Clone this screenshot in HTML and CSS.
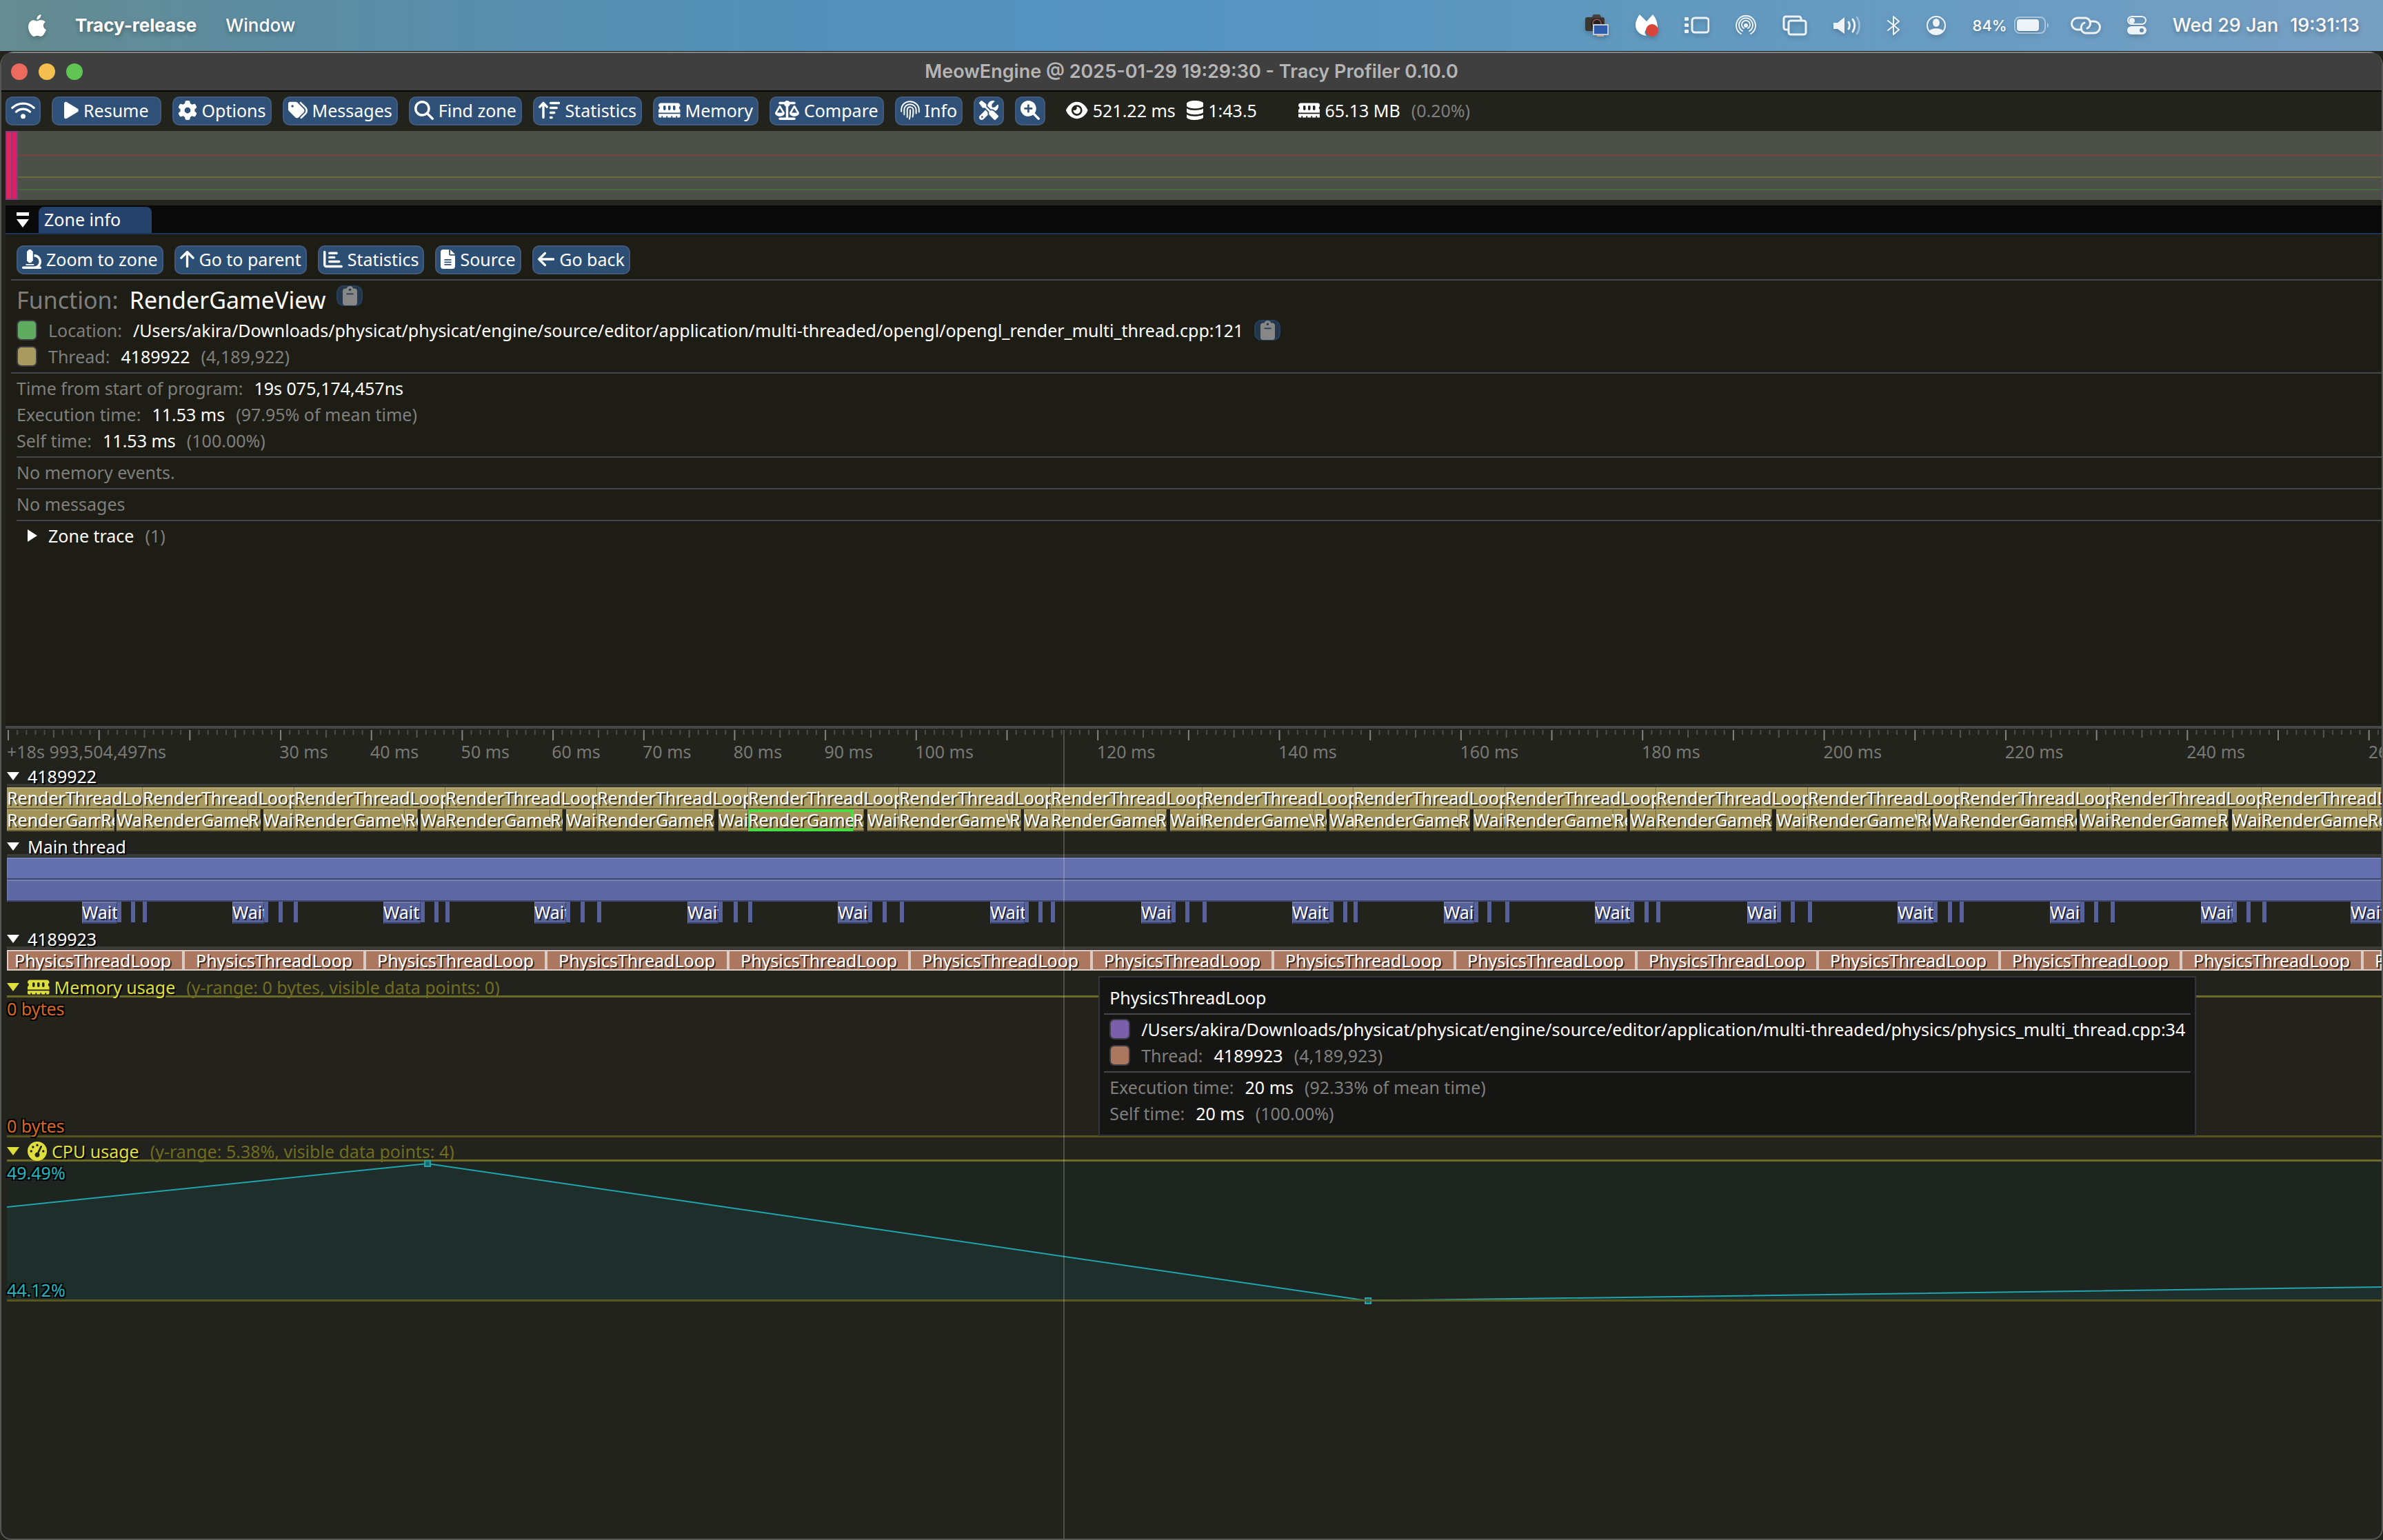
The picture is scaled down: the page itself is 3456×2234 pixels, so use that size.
FILE: index.html
```html
<!DOCTYPE html>
<html lang="en">
<head>
<meta charset="utf-8">
<title>Tracy Profiler</title>
<link rel="stylesheet" href="styles.css">
</head>
<body>
<svg class="defs" aria-hidden="true">
  <defs>
    <g id="i-wifi" fill="none" stroke="currentColor" stroke-width="60" stroke-linecap="round"><path d="M34 190A410 410 0 0 1 606 190M138 296A262 262 0 0 1 502 296"/><circle cx="320" cy="416" r="34" fill="currentColor"/></g>
    <path id="i-play" d="M73 39c-14.800-9.100-33.400-9.400-48.500-.900S0 62.600 0 80V432c0 17.400 9.400 33.400 24.500 41.900s33.700 8.100 48.500-.900L361 297c14.300-8.700 23-24.200 23-41s-8.700-32.200-23-41L73 39z"/>
    <path id="i-gear" d="M495.9 166.6c3.2 8.7 .5 18.400-6.400 24.600l-43.300 39.400c1.100 8.300 1.700 16.800 1.700 25.400s-.6 17.100-1.700 25.400l43.300 39.400c6.900 6.200 9.600 15.900 6.400 24.600c-4.400 11.900-9.700 23.300-15.800 34.300l-4.700 8.100c-6.600 11-14 21.400-22.100 31.200c-5.900 7.200-15.700 9.600-24.500 6.800l-55.700-17.700c-13.400 10.300-28.200 18.900-44 25.400l-12.500 57.100c-2 9.100-9 16.300-18.200 17.800c-13.800 2.300-28 3.500-42.500 3.500s-28.700-1.200-42.500-3.500c-9.200-1.500-16.200-8.700-18.200-17.800l-12.500-57.100c-15.800-6.500-30.600-15.100-44-25.400L83.1 425.900c-8.800 2.800-18.600 .3-24.500-6.800c-8.100-9.800-15.500-20.200-22.100-31.200l-4.700-8.100c-6.100-11-11.400-22.400-15.800-34.300c-3.200-8.700-.5-18.400 6.400-24.600l43.300-39.400C64.600 273.100 64 264.600 64 256s.6-17.100 1.700-25.400L22.400 191.200c-6.900-6.200-9.600-15.900-6.400-24.600c4.400-11.900 9.700-23.300 15.800-34.300l4.700-8.100c6.600-11 14-21.400 22.100-31.200c5.900-7.200 15.700-9.600 24.500-6.800l55.700 17.700c13.400-10.300 28.200-18.900 44-25.400l12.500-57.100c2-9.100 9-16.300 18.200-17.800C227.300 1.200 241.500 0 256 0s28.700 1.200 42.500 3.500c9.200 1.500 16.200 8.700 18.200 17.800l12.500 57.100c15.800 6.500 30.600 15.100 44 25.400l55.700-17.700c8.800-2.800 18.600-.3 24.500 6.800c8.100 9.800 15.500 20.200 22.100 31.200l4.700 8.100c6.100 11 11.400 22.400 15.800 34.300zM256 336a80 80 0 1 0 0-160 80 80 0 1 0 0 160z"/>
    <path id="i-tags" d="M345 39.100L472.800 168.400c52.400 53 52.400 138.200 0 191.200L360.800 472.900c-9.300 9.400-24.500 9.500-33.900 .2s-9.500-24.500-.2-33.900L438.600 325.900c33.900-34.300 33.900-89.400 0-123.700L310.900 72.900c-9.300-9.400-9.200-24.600 .2-33.900s24.600-9.200 33.900 .2zM0 229.500V80C0 53.500 21.500 32 48 32H197.500c17 0 33.300 6.700 45.300 18.700l168 168c25 25 25 65.500 0 90.500L277.300 442.700c-25 25-65.500 25-90.500 0l-168-168C6.700 262.700 0 246.500 0 229.500zM144 144a32 32 0 1 0 -64 0 32 32 0 1 0 64 0z"/>
    <path id="i-search" d="M416 208c0 45.900-14.900 88.300-40 122.700L502.600 457.400c12.500 12.500 12.500 32.800 0 45.300s-32.800 12.500-45.300 0L330.700 376c-34.400 25.200-76.800 40-122.700 40C93.100 416 0 322.900 0 208S93.100 0 208 0S416 93.100 416 208zM208 352a144 144 0 1 0 0-288 144 144 0 1 0 0 288z"/>
    <path id="i-zoomin" fill-rule="evenodd" d="M416 208c0 45.900-14.900 88.300-40 122.700L502.600 457.400c12.500 12.500 12.500 32.800 0 45.300s-32.800 12.500-45.300 0L330.700 376c-34.400 25.200-76.800 40-122.700 40C93.100 416 0 322.900 0 208S93.100 0 208 0S416 93.100 416 208zM184 296c0 13.300 10.700 24 24 24s24-10.700 24-24V232h64c13.300 0 24-10.700 24-24s-10.700-24-24-24H232V120c0-13.300-10.700-24-24-24s-24 10.700-24 24v64H120c-13.300 0-24 10.700-24 24s10.700 24 24 24h64v64z"/>
    <g id="i-sort" fill="none" stroke="currentColor" stroke-width="62" stroke-linecap="round" stroke-linejoin="round"><path d="M128 450V66M32 166l96-104 96 104M320 64h224M320 192h160M320 320h96M320 448h32"/></g>
    <path id="i-memory" d="M64 64C28.700 64 0 92.700 0 128v7.400c0 6.800 4.400 12.600 10.100 16.300C23.300 160.300 32 175.100 32 192s-8.700 31.700-21.900 40.300C4.400 236 0 241.800 0 248.600V320H576V248.600c0-6.800-4.400-12.600-10.100-16.300C552.700 223.700 544 208.900 544 192s8.700-31.700 21.900-40.300c5.700-3.700 10.100-9.500 10.100-16.300V128c0-35.300-28.700-64-64-64H64zM576 352H0v64c0 17.700 14.300 32 32 32H80V416c0-8.800 7.200-16 16-16s16 7.200 16 16v32h96V416c0-8.800 7.200-16 16-16s16 7.200 16 16v32h96V416c0-8.800 7.200-16 16-16s16 7.200 16 16v32h96V416c0-8.800 7.200-16 16-16s16 7.200 16 16v32h48c17.700 0 32-14.300 32-32V352zM192 160v64c0 17.700-14.300 32-32 32s-32-14.300-32-32V160c0-17.700 14.300-32 32-32s32 14.300 32 32zm128 0v64c0 17.700-14.300 32-32 32s-32-14.300-32-32V160c0-17.700 14.300-32 32-32s32 14.300 32 32zm128 0v64c0 17.700-14.300 32-32 32s-32-14.300-32-32V160c0-17.700 14.300-32 32-32s32 14.300 32 32z"/>
    <path id="i-scale" d="M384 32H512c17.700 0 32 14.300 32 32s-14.300 32-32 32H398.400c-5.200 25.800-22.900 47.100-46.400 57.300V448H512c17.700 0 32 14.300 32 32s-14.300 32-32 32H320 128c-17.700 0-32-14.300-32-32s14.300-32 32-32H288V153.300c-23.500-10.300-41.200-31.600-46.400-57.300H128c-17.700 0-32-14.300-32-32s14.300-32 32-32H256c14.600-19.400 37.800-32 64-32s49.400 12.600 64 32zm55.600 288H584.400L512 195.800 439.600 320zM512 416c-62.900 0-115.200-34-126-78.900c-2.600-11 1-22.300 6.700-32.100l95.200-163.200c5-8.600 14.200-13.800 24.100-13.800s19.100 5.300 24.100 13.800l95.200 163.200c5.700 9.800 9.300 21.100 6.700 32.100C627.200 382 574.900 416 512 416zM126.800 195.800L54.400 320H199.300L126.800 195.800zM.9 337.100c-2.600-11 1-22.300 6.700-32.100l95.200-163.200c5-8.600 14.200-13.800 24.100-13.800s19.100 5.300 24.100 13.800l95.200 163.200c5.700 9.800 9.300 21.100 6.700 32.100C242 382 189.700 416 126.800 416S11.700 382 .9 337.100z"/>
    <g id="i-finger" fill="none" stroke="currentColor" stroke-width="36" stroke-linecap="round"><path d="M22 290V240C24 110 125 22 250 22S486 112 490 236V300M98 370V245C98 160 165 96 254 96S414 160 414 250V340M176 440C182 380 176 310 178 245C180 200 214 170 256 170S336 204 338 250C340 310 336 370 322 430M256 246C258 330 258 410 236 486"/></g>
    <path id="i-tools" d="M78.600 5C69.100-2.400 55.600-1.500 47 7L7 47c-8.500 8.500-9.400 22-2.100 31.600l80 104c4.500 5.900 11.600 9.400 19 9.400h54.100l109 109c-14.700 29-10 65.400 14.300 89.600l112 112c12.500 12.500 32.800 12.500 45.300 0l64-64c12.500-12.500 12.500-32.800 0-45.300l-112-112c-24.200-24.200-60.600-29-89.600-14.300l-109-109V104c0-7.500-3.500-14.500-9.400-19L78.600 5zM19.900 396.100C7.200 408.800 0 426.100 0 444.100C0 481.600 30.400 512 67.900 512c18 0 35.300-7.200 48-19.900L233.700 374.300c-7.800-20.900-9-43.600-3.600-65.100l-61.700-61.700L19.900 396.100zM512 144c0-10.500-1.100-20.700-3.200-30.500c-2.400-11.200-16.100-14.100-24.200-6l-63.900 63.900c-3 3-7.100 4.700-11.300 4.700H352c-8.800 0-16-7.200-16-16V102.600c0-4.200 1.700-8.300 4.700-11.300l63.900-63.900c8.100-8.100 5.200-21.800-6-24.200C388.700 1.100 378.500 0 368 0C288.500 0 224 64.500 224 144l0 .8 85.300 85.300c36-9.100 75.800 .5 104 28.700L429 274.500c49-23 83-72.800 83-130.500zM56 432a24 24 0 1 1 48 0 24 24 0 1 1 -48 0z"/>
    <path id="i-eye" d="M288 32c-80.800 0-145.500 36.800-192.600 80.600C48.600 156 17.300 208 2.500 243.700c-3.300 7.900-3.300 16.700 0 24.600C17.300 304 48.600 356 95.400 399.400C142.500 443.200 207.200 480 288 480s145.500-36.800 192.600-80.600c46.800-43.500 78.100-95.400 93-131.100c3.300-7.900 3.300-16.700 0-24.600c-14.900-35.700-46.200-87.700-93-131.100C433.500 68.800 368.800 32 288 32zM144 256a144 144 0 1 1 288 0 144 144 0 1 1 -288 0zm144-64c0 35.300-28.700 64-64 64c-7.100 0-13.900-1.200-20.300-3.300c-5.500-1.800-11.900 1.600-11.700 7.400c.3 6.900 1.300 13.800 3.200 20.700c13.700 51.200 66.400 81.600 117.600 67.900s81.600-66.400 67.900-117.600c-11.100-41.500-47.800-69.400-88.600-71.100c-5.800-.2-9.200 6.100-7.400 11.700c2.100 6.400 3.300 13.200 3.300 20.300z"/>
    <path id="i-db" d="M448 80v48c0 44-100 80-224 80S0 172 0 128V80C0 36 100 0 224 0s224 36 224 80zM0 206c50 38 135 50 224 50s174-12 224-50v82c0 44-100 80-224 80S0 332 0 288zM0 366c50 38 135 50 224 50s174-12 224-50v66c0 44-100 80-224 80S0 476 0 432z"/>
    <path id="i-scope" d="M160 32c0-17.700 14.300-32 32-32h32c17.700 0 32 14.300 32 32c17.700 0 32 14.300 32 32V288c0 17.700-14.300 32-32 32c0 17.700-14.300 32-32 32H192c-17.700 0-32-14.300-32-32c-17.700 0-32-14.300-32-32V64c0-17.700 14.300-32 32-32zM32 448H320c70.700 0 128-57.300 128-128s-57.300-128-128-128V128c106 0 192 86 192 192c0 49.200-18.500 94-48.900 128H480c17.700 0 32 14.300 32 32s-14.300 32-32 32H320 32c-17.700 0-32-14.300-32-32s14.300-32 32-32zm80-64H304c8.800 0 16 7.200 16 16s-7.200 16-16 16H112c-8.800 0-16-7.200-16-16s7.200-16 16-16z"/>
    <g id="i-up" fill="none" stroke="currentColor" stroke-width="62" stroke-linecap="round" stroke-linejoin="round"><path d="M192 450V66M34 222L192 64l158 158"/></g>
    <g id="i-left" fill="none" stroke="currentColor" stroke-width="62" stroke-linecap="round" stroke-linejoin="round"><path d="M416 256H34M190 98L32 256l158 158"/></g>
    <g id="i-bars" fill="none" stroke="currentColor" stroke-width="62" stroke-linecap="round" stroke-linejoin="round"><path d="M32 62V400c0 26 22 48 48 48H480M160 96H352M160 208H288M160 320H416"/></g>
    <path id="i-file" d="M64 0C28.700 0 0 28.700 0 64V448c0 35.300 28.700 64 64 64H320c35.300 0 64-28.700 64-64V160H256c-17.700 0-32-14.300-32-32V0H64zM256 0V128H384L256 0zM112 256H272c8.800 0 16 7.200 16 16s-7.200 16-16 16H112c-8.800 0-16-7.200-16-16s7.200-16 16-16zm0 64H272c8.800 0 16 7.200 16 16s-7.200 16-16 16H112c-8.800 0-16-7.200-16-16s7.200-16 16-16zm0 64H272c8.800 0 16 7.200 16 16s-7.200 16-16 16H112c-8.800 0-16-7.200-16-16s7.200-16 16-16z"/>
    <path id="i-clip" fill-rule="evenodd" d="M192 0c-42 0-77 27-90 64H64C29 64 0 93 0 128V448c0 35 29 64 64 64H320c35 0 64-29 64-64V128c0-35-29-64-64-64H282C269 27 234 0 192 0zM192 64a32 32 0 1 1 0 64 32 32 0 1 1 0-64zM112 192H272a16 16 0 0 1 0 32H112a16 16 0 0 1 0-32z"/>
    <path id="i-gauge" fill-rule="evenodd" d="M0 256a256 256 0 1 1 512 0A256 256 0 1 1 0 256zM288 96a32 32 0 1 0-64 0 32 32 0 1 0 64 0zM256 416c35 0 64-29 64-64 0-17-7-33-18-44L382 142c6-12 1-26-11-32s-26-1-32 11L259 288c-36-2-67 28-67 64 0 35 29 64 64 64zM176 144a32 32 0 1 0-64 0 32 32 0 1 0 64 0zM96 288a32 32 0 1 0 0-64 32 32 0 1 0 0 64zM448 256a32 32 0 1 0-64 0 32 32 0 1 0 64 0z"/>
    <path id="i-right" d="M0 0L14 9L0 18z"/>
    <path id="i-down" d="M0 0H18L9 12z"/>
  </defs>
</svg>

<header class="menubar">
  <nav class="menubar-left">
    <svg class="apple" viewBox="0 0 26 32"><path d="M18.500 0C18.700 2 17.900 3.900 16.800 5.200 15.700 6.500 14 7.500 12.300 7.400 12.100 5.500 13 3.600 14 2.400 15.200 1.100 17 .1 18.500 0zM24.800 11C23 12.200 21.900 13.900 21.900 16.200c0 2.800 1.700 4.900 4.100 5.800-.7 2.200-1.800 4.400-3.300 6.500-1.300 1.900-2.600 3.300-4.600 3.300-1.900 0-2.600-1.100-4.900-1.100-2.300 0-3.100 1.100-4.900 1.200-1.900 0-3.300-1.600-4.700-3.600C-.2 23.400-.9 16.500 1.400 12.300 2.700 9.800 5.100 8.300 7.500 8.200c2.100 0 3.800 1.300 5.100 1.300 1.200 0 3.300-1.500 5.900-1.400 2.500.1 4.800 1 6.300 2.900z" fill="#fff"/></svg>
    <b>Tracy-release</b>
    <span>Window</span>
  </nav>
  <div class="menubar-right">
    <svg class="m-cam" viewBox="0 0 34 34"><rect x="0" y="5" width="28" height="20" rx="3" fill="#3a3733"/><path d="M9 6l3-5h9l3 5z" fill="#46423e"/><circle cx="17" cy="15" r="9" fill="#221f1e"/><circle cx="17" cy="14" r="6" fill="none" stroke="#84514b" stroke-width="2"/><rect x="12" y="16" width="21" height="14" fill="#2f5dad" stroke="#c3cbd4" stroke-width="2"/><path d="M17 32h10" stroke="#c3a58b" stroke-width="2"/></svg>
    <svg class="m-mb" viewBox="0 0 34 32"><path d="M7 0L17 10 26 0C31 6 33 12 33 20L20 20C14 22 13 27 17 31 6 30 0 22 1 13 2 8 4 4 7 0z" fill="#fff"/><circle cx="25" cy="23" r="9" fill="#d9453b"/></svg>
    <svg class="m-stage" viewBox="0 0 36 26"><g fill="#eef3f8"><rect y="1" width="6" height="5" rx="1"/><rect y="10" width="6" height="5" rx="1"/><rect y="19" width="6" height="5" rx="1"/></g><rect x="11" y="2" width="24" height="21" rx="4" fill="none" stroke="#eef3f8" stroke-width="3"/></svg>
    <svg class="m-drop" viewBox="0 0 30 30" fill="none" stroke="#eef3f8" stroke-width="2" stroke-linecap="round"><path d="M8 27A14 14 0 1 1 22 27M10 23A10 10 0 1 1 20 23M12 19A6 6 0 1 1 18 19"/><circle cx="15" cy="15" r="2" fill="#eef3f8"/></svg>
    <svg class="m-win" viewBox="0 0 36 30" fill="none" stroke="#eef3f8" stroke-width="3"><path d="M8 21H5a3 3 0 0 1-3-3V5a3 3 0 0 1 3-3H24a3 3 0 0 1 3 3V7"/><rect x="9" y="8" width="25" height="20" rx="3"/></svg>
    <svg class="m-vol" viewBox="0 0 40 28" fill="none" stroke="#eef3f8" stroke-width="3" stroke-linecap="round"><path d="M0 10H6L16 2V26L6 19H0z" fill="#eef3f8" stroke="none"/><path d="M22 9A10 10 0 0 1 22 19M28 5A16 16 0 0 1 28 23"/><path d="M34 2A22 22 0 0 1 34 26" opacity=".4"/></svg>
    <svg class="m-bt" viewBox="0 0 18 30" fill="none" stroke="#eef3f8" stroke-width="2" stroke-linejoin="round" stroke-linecap="round"><path d="M1 8L17 21 9 28V2L17 9 1 22"/></svg>
    <svg class="m-user" viewBox="0 0 30 30"><circle cx="15" cy="15" r="13" fill="none" stroke="#eef3f8" stroke-width="2"/><ellipse cx="15" cy="11" rx="5" ry="6" fill="#eef3f8"/><path d="M5 23C8 18 22 18 25 23 20 30 10 30 5 23z" fill="#eef3f8"/></svg>
    <span class="battery"><small>84%</small><svg class="m-bat" viewBox="0 0 52 26"><rect x="1" y="1" width="44" height="23" rx="7" fill="none" stroke="#eef3f8" stroke-width="2" opacity=".5"/><rect x="4" y="4" width="32" height="17" rx="4" fill="#eef3f8"/><path d="M48 9q4 3 0 8z" fill="#eef3f8" opacity=".6"/></svg></span>
    <svg class="m-link" viewBox="0 0 44 28" fill="none" stroke="#eef3f8" stroke-width="3" stroke-linecap="round"><path d="M15 20H10A8 8 0 0 1 10 3H22A8 8 0 0 1 24 18M29 8H34A8 8 0 0 1 34 25H21A8 8 0 0 1 20 10"/></svg>
    <svg class="m-cc" viewBox="0 0 28 28"><rect x="1" y="1" width="26" height="11" rx="6" fill="none" stroke="#eef3f8" stroke-width="2"/><circle cx="7" cy="7" r="4" fill="#eef3f8"/><path fill-rule="evenodd" fill="#eef3f8" d="M6 15H22a6 6 0 0 1 0 12H6a6 6 0 0 1 0-12zM21 18a3 3 0 1 0 0 6 3 3 0 1 0 0-6z"/></svg>
    <time><span>Wed 29 Jan</span><span>19:31:13</span></time>
  </div>
</header>

<main class="window">
  <div class="titlebar">
    <div class="lights"><i class="red"></i><i class="yellow"></i><i class="green"></i></div>
    <h1>MeowEngine @ 2025-01-29 19:29:30 - Tracy Profiler 0.10.0</h1>
  </div>

  <div class="toolbar">
    <button aria-label="Connection"><svg class="icon" viewBox="0 0 640 512"><use href="#i-wifi"/></svg></button>
    <button class="wide"><svg class="icon" viewBox="0 0 384 512"><use href="#i-play"/></svg>Resume</button>
    <button><svg class="icon" viewBox="0 0 512 512"><use href="#i-gear"/></svg>Options</button>
    <button><svg class="icon" viewBox="0 0 512 512"><use href="#i-tags"/></svg>Messages</button>
    <button><svg class="icon" viewBox="0 0 512 512"><use href="#i-search"/></svg>Find zone</button>
    <button><svg class="icon" viewBox="0 0 576 512"><use href="#i-sort"/></svg>Statistics</button>
    <button><svg class="icon" viewBox="0 0 576 512"><use href="#i-memory"/></svg>Memory</button>
    <button><svg class="icon" viewBox="0 0 640 512"><use href="#i-scale"/></svg>Compare</button>
    <button><svg class="icon" viewBox="0 0 512 512"><use href="#i-finger"/></svg>Info</button>
    <button aria-label="Tools"><svg class="icon" viewBox="0 0 512 512"><use href="#i-tools"/></svg></button>
    <button aria-label="Magnify"><svg class="icon" viewBox="0 0 512 512"><use href="#i-zoomin"/></svg></button>
    <div class="stats">
      <span><svg class="icon" viewBox="0 0 576 512"><use href="#i-eye"/></svg>521.22 ms</span>
      <span><svg class="icon" viewBox="0 0 448 512"><use href="#i-db"/></svg>1:43.5</span>
      <span class="mem"><svg class="icon" viewBox="0 0 576 512"><use href="#i-memory"/></svg>65.13 MB</span>
      <span class="dim">(0.20%)</span>
    </div>
  </div>

  <div class="frames"><i></i></div>

  <section class="panel">
    <div class="tabs">
      <svg class="collapse" viewBox="0 0 18 22"><path d="M0 0H18V5H0zM0 10H18L9 22z" fill="#fff"/></svg>
      <span class="tab">Zone info</span>
    </div>
    <div class="info">
      <div class="actions">
        <button><svg class="icon" viewBox="0 0 512 512"><use href="#i-scope"/></svg>Zoom to zone</button>
        <button><svg class="icon" viewBox="0 0 384 512"><use href="#i-up"/></svg>Go to parent</button>
        <button><svg class="icon" viewBox="0 0 512 512"><use href="#i-bars"/></svg>Statistics</button>
        <button><svg class="icon" viewBox="0 0 384 512"><use href="#i-file"/></svg>Source</button>
        <button><svg class="icon" viewBox="0 0 448 512"><use href="#i-left"/></svg>Go back</button>
      </div>
      <hr class="outdent">
      <div class="row big"><span class="dim">Function:</span><span>RenderGameView</span><button class="copy" aria-label="Copy function"><svg class="icon" viewBox="0 0 384 512"><use href="#i-clip"/></svg></button></div>
      <div class="row"><i class="swatch" style="background:#61ab61"></i><span class="dim">Location:</span><span>/Users/akira/Downloads/physicat/physicat/engine/source/editor/application/multi-threaded/opengl/opengl_render_multi_thread.cpp:121</span><button class="copy" aria-label="Copy location"><svg class="icon" viewBox="0 0 384 512"><use href="#i-clip"/></svg></button></div>
      <div class="row"><i class="swatch" style="background:#a99a60"></i><span class="dim">Thread:</span><span>4189922</span><span class="dim">(4,189,922)</span></div>
      <hr class="outdent">
      <div class="row"><span class="dim">Time from start of program:</span><span>19s 075,174,457ns</span></div>
      <div class="row"><span class="dim">Execution time:</span><span>11.53 ms</span><span class="dim">(97.95% of mean time)</span></div>
      <div class="row"><span class="dim">Self time:</span><span>11.53 ms</span><span class="dim">(100.00%)</span></div>
      <hr>
      <div class="row dim">No memory events.</div>
      <hr>
      <div class="row dim">No messages</div>
      <hr>
      <div class="row trace"><svg class="arrow" viewBox="0 0 14 18"><use href="#i-right"/></svg><span>Zone trace</span><span class="dim">(1)</span></div>
    </div>
  </section>

  <section class="timeline">
    <svg class="ticks" id="ticks"></svg>
    <div class="ticklabels" id="ticklabels"></div>

    <div class="track">
      <div class="head"><svg class="fold" viewBox="0 0 18 12"><use href="#i-down"/></svg>4189922</div>
      <div class="lane tan" id="render-loop"></div>
      <div class="lane tan deep" id="render-zones"></div>
    </div>
    <div class="track">
      <div class="head"><svg class="fold" viewBox="0 0 18 12"><use href="#i-down"/></svg>Main thread</div>
      <div class="lane blue"><span class="zone" style="flex-grow:1"></span></div>
      <div class="lane blue deep"><span class="zone" style="flex-grow:1"></span></div>
      <div class="lane blue deeper" id="main-zones"></div>
    </div>
    <div class="track">
      <div class="head"><svg class="fold" viewBox="0 0 18 12"><use href="#i-down"/></svg>4189923</div>
      <div class="lane brown" id="physics-zones"></div>
    </div>
    <div class="track">
      <div class="head yellow"><svg class="fold" viewBox="0 0 18 12"><use href="#i-down"/></svg><svg class="icon" viewBox="0 0 576 512"><use href="#i-memory"/></svg>Memory usage<span class="range">(y-range: 0 bytes, visible data points: 0)</span></div>
      <div class="plot memory"><span>0 bytes</span><span>0 bytes</span></div>
    </div>
    <div class="track">
      <div class="head yellow"><svg class="fold" viewBox="0 0 18 12"><use href="#i-down"/></svg><svg class="icon" viewBox="0 0 512 512"><use href="#i-gauge"/></svg>CPU usage<span class="range">(y-range: 5.38%, visible data points: 4)</span></div>
      <div class="plot cpu">
        <svg class="graph" viewBox="0 0 3444 200" preserveAspectRatio="none"><path d="M0 65L610 2L1974 201L3444 181V201H0z" fill="#1d2e2b"/><path d="M0 65L610 2L1974 201L3444 181" fill="none" stroke="#21a5ad" stroke-width="2" vector-effect="non-scaling-stroke"/><path d="M606 -2h8v8h-8zM1970 197h8v8h-8z" fill="#1c6b6c" stroke="#21a5ad" stroke-width="2"/></svg>
        <span>49.49%</span><span>44.12%</span>
      </div>
    </div>

    <div class="cursor"></div>
    <aside class="tooltip">
      <div class="row">PhysicsThreadLoop</div>
      <hr>
      <div class="row"><i class="swatch" style="background:#7a5fab"></i><span>/Users/akira/Downloads/physicat/physicat/engine/source/editor/application/multi-threaded/physics/physics_multi_thread.cpp:34</span></div>
      <div class="row"><i class="swatch" style="background:#ab775e"></i><span class="dim">Thread:</span><span>4189923</span><span class="dim">(4,189,923)</span></div>
      <hr>
      <div class="row"><span class="dim">Execution time:</span><span>20 ms</span><span class="dim">(92.33% of mean time)</span></div>
      <div class="row"><span class="dim">Self time:</span><span>20 ms</span><span class="dim">(100.00%)</span></div>
    </aside>
  </section>
</main>
<script src="app.js"></script>
</body>
</html>
```
FILE: app.js
```js
// The visible time span, in the units of the zone data below.
const START = 10;
const END = 3454;
const MS = 13.168;

// Fills a lane with [from, to, label, class] zones; the holes become spacers.
function fillLane(id, zones) {
  const lane = document.getElementById(id);
  let at = START;
  const add = (cls, size, text) => {
    const el = document.createElement('span');
    el.className = cls;
    el.style.flexGrow = size;
    el.textContent = text;
    lane.append(el);
  };
  for (const [from, to, label, cls] of zones) {
    if (from > at) add('hole', from - at, '');
    add('zone ' + (cls || ''), to - from, label);
    at = to;
  }
  if (at < END) add('hole', END - at, '');
}

const frames = [10, 207, 427, 646, 866, 1085, 1304, 1524, 1744, 1963, 2183, 2402, 2622, 2842, 3061, 3280, END];
fillLane('render-loop', frames.slice(0, -1).map((x, i) => [x, frames[i + 1], 'RenderThreadLoop']));

// Per frame: end of RenderGameView, end of Render, start of Wait.
const parts = [
  [146, 166, 169], [360, 378, 382], [587, 606, 610], [798, 816, 821],
  [1020, 1036, 1042], [1237, 1253, 1258], [1464, 1481, 1485], [1676, 1692, 1697],
  [1906, 1924, 1928], [2115, 2132, 2137], [2340, 2360, 2364], [2554, 2570, 2576],
  [2780, 2800, 2803], [2993, 3012, 3016], [3216, 3232, 3237], [3434, END, END]
];
fillLane('render-zones', parts.flatMap(([a, b, c], i) => {
  const list = [
    [frames[i], a, 'RenderGameView', i === 5 ? 'selected' : ''],
    [a, b, 'Render']
  ];
  if (c < END) list.push([c, frames[i + 1], 'Wait']);
  return list;
}));

const waits = [
  [119, 170, 190, 207], [337, 383, 404, 426], [556, 610, 630, 646], [775, 821, 842, 866],
  [997, 1042, 1064, 1085], [1215, 1259, 1280, 1305], [1436, 1486, 1506, 1524], [1655, 1699, 1719, 1744],
  [1874, 1928, 1948, 1963], [2094, 2138, 2157, 2183], [2313, 2364, 2385, 2402], [2534, 2577, 2597, 2622],
  [2752, 2804, 2825, 2842], [2973, 3017, 3037, 3061], [3192, 3238, 3258, 3281]
];
fillLane('main-zones', waits.flatMap(([a, b, c, d]) => [
  [a, b, 'Wait'], [b, b + 6, '', 'thin'], [c, c + 6, '', 'thin'], [d, d + 6, '', 'thin']
]).concat([[3409, END, 'Wait']]));

const physics = [10, 266, 529, 792, 1056, 1319, 1583, 1846, 2110, 2373, 2636, 2900, 3163, 3426, END];
fillLane('physics-zones', physics.slice(0, -1).map((x, i) => [x, physics[i + 1], 'PhysicsThreadLoop', i ? '' : 'cut']));

// Ruler
const span = (END - START - 1) / MS;
const ticks = document.getElementById('ticks');
for (let ms = 0; ms < span; ms++) {
  const kind = ms % 10 === 0 ? 'major' : ms % 5 === 0 ? 'mid' : 'minor';
  const mark = document.createElementNS('http://www.w3.org/2000/svg', 'rect');
  mark.setAttribute('x', (ms / span * 100) + '%');
  mark.setAttribute('width', 2);
  mark.setAttribute('height', { major: 15, mid: 11, minor: 7 }[kind]);
  mark.setAttribute('class', kind);
  ticks.append(mark);
}
const labels = document.getElementById('ticklabels');
const stops = [0, 30, 40, 50, 60, 70, 80, 90, 100, 120, 140, 160, 180, 200, 220, 240, 260];
stops.forEach((ms, i) => {
  const el = document.createElement('span');
  el.style.flexGrow = (i + 1 < stops.length ? stops[i + 1] : span) - ms;
  el.textContent = ms ? ms + ' ms' : '+18s 993,504,497ns';
  labels.append(el);
});
```
FILE: styles.css
```css
* { box-sizing: border-box; }

body {
  margin: 0;
  height: 100vh;
  display: flex;
  flex-direction: column;
  overflow: hidden;
  background: #22231d;
  color: #fff;
  font: 25px/30px "Noto Sans", sans-serif;
}

.defs { position: absolute; width: 0; height: 0; }
.icon { height: 28px; flex: none; fill: currentColor; }
.dim { color: #7f7f7d; }

/* Menu bar */
.menubar {
  height: 74px;
  flex: none;
  display: flex;
  justify-content: space-between;
  align-items: center;
  padding: 0 34px 0 41px;
  font: 26px/32px Inter, sans-serif;
  background: linear-gradient(90deg, #668b90, #5c8ca2 12%, #5390b8 32%, #5593c3 50%, #5f98be 66%, #6a9cc3 84%, #779fc2);
  text-shadow: 0 3px 6px rgba(0, 0, 0, .3);
}
.menubar svg { filter: drop-shadow(0 3px 3px rgba(0, 0, 0, .2)); }
.menubar-left { display: flex; align-items: center; gap: 42px; }
.menubar-left span { font-weight: 500; }
.apple { width: 26px; height: 32px; }
.menubar-right { display: flex; align-items: center; gap: 38px; }
.m-cam { width: 34px; height: 34px; }
.m-mb { width: 34px; height: 32px; }
.m-stage { width: 36px; height: 26px; }
.m-drop { width: 30px; height: 30px; }
.m-win { width: 36px; height: 30px; }
.m-vol { width: 40px; height: 28px; }
.m-bt { width: 18px; height: 30px; }
.m-user { width: 30px; height: 30px; }
.battery { display: flex; align-items: center; gap: 10px; margin-right: -8px; }
.battery small { font-size: 22px; font-weight: 500; }
.m-bat { width: 52px; height: 26px; }
.m-link { width: 44px; height: 28px; }
.m-cc { width: 28px; height: 28px; }
.menubar time { display: flex; gap: 17px; font-size: 27px; font-weight: 500; }

/* Window frame */
.window {
  flex: 1;
  min-height: 0;
  display: flex;
  flex-direction: column;
  margin-top: 1px;
  border: solid #565753;
  border-width: 0 2px 2px;
  border-radius: 20px 20px 16px 16px;
  overflow: hidden;
}
.titlebar {
  height: 58px;
  flex: none;
  display: grid;
  grid-template-columns: 1fr auto 1fr;
  align-items: center;
  padding: 0 14px;
  background: #3f3f3f;
  border-top: 2px solid #828385;
  border-bottom: 2px solid #050505;
}
.titlebar h1 { margin: 0; font: 600 27px/32px Inter, sans-serif; color: #b5b5b5; }
.lights { display: flex; gap: 16px; }
.lights i { width: 24px; height: 24px; border-radius: 50%; }
.lights .red { background: #ec6a5e; }
.lights .yellow { background: #f5bf4f; }
.lights .green { background: #61c554; }

/* Buttons */
button {
  height: 42px;
  display: flex;
  align-items: center;
  justify-content: center;
  gap: 7px;
  padding: 0 6px 2px;
  color: #fff;
  font: inherit;
  white-space: nowrap;
  background: #2f5177;
  border: 2px solid #445a7c;
  border-radius: 10px;
}
.toolbar { display: flex; align-items: center; gap: 16px; padding: 7px 6px 8px; flex: none; }
.toolbar .wide { padding: 0 16px 2px; }
.stats { display: flex; gap: 16px; padding: 0 0 2px 14px; }
.stats span { display: flex; align-items: center; gap: 7px; }
.stats .mem { padding-left: 44px; }

/* Frame overview strip */
.frames {
  height: 100px;
  flex: none;
  margin: 0 0 8px 6px;
  background:
    linear-gradient(#73453f, #73453f) 0 34px / 100% 2px no-repeat,
    linear-gradient(#6a6c40, #6a6c40) 0 66px / 100% 2px no-repeat,
    linear-gradient(#45683f, #45683f) 0 84px / 100% 2px no-repeat,
    #4d5048;
}
.frames i {
  display: block;
  width: 18px;
  height: 100px;
  border: 2px solid #8a3a75;
  background: linear-gradient(90deg, #e2245f 6px, #8a3a75 6px, #8a3a75 7px, #dd1d63 7px);
}

/* Zone info panel */
.panel { flex: 378 1 0; min-height: 0; margin-left: 6px; background: #1d1d15; overflow: hidden; }
.tabs { height: 42px; display: flex; align-items: flex-end; gap: 14px; padding-left: 16px; background: #090909; border-bottom: 2px solid #1c3459; }
.collapse { width: 18px; height: 22px; margin-bottom: 8px; }
.tab { width: 164px; height: 38px; padding: 3px 8px; background: #24426b; border-radius: 8px 8px 0 0; }
.info { display: flex; flex-direction: column; gap: 8px; padding: 16px 0 0 16px; }
.actions { display: flex; gap: 16px; }
.actions button { background: #2c4e72; }
hr { width: 100%; height: 2px; margin: -1px 0; border: 0; background: #47464b; flex: none; }
hr.outdent { width: auto; margin-left: -8px; }
.row { height: 30px; display: flex; align-items: center; gap: 16px; padding-bottom: 2px; white-space: nowrap; }
.row.big { height: 43px; font-size: 34px; }
.copy { width: 38px; height: 30px; padding: 0; background: #24364a; border-color: #263f5c; color: #878787; }
.row.big .copy { align-self: flex-start; }
.swatch { width: 30px; height: 30px; border: 2px solid #3c3c42; border-radius: 7px; }
.trace { padding-left: 16px; }
.arrow { width: 14px; height: 18px; fill: #fff; }

/* Timeline */
.timeline {
  flex: 588 1 0;
  min-height: 0;
  position: relative;
  margin-left: 6px;
  border-top: 4px solid #46454a;
}
.ticks { display: block; width: calc(100% - 3px); height: 16px; margin: 2px 0 0 3px; }
.major { fill: #82837e; }
.mid { fill: #565751; }
.minor { fill: #4b4c46; }
.ticklabels { display: flex; margin-left: 2px; color: #787974; white-space: nowrap; overflow: hidden; }
.ticklabels span { flex: 1 1 0; min-width: 0; }
.track { margin: 0 0 6px 2px; }
.head {
  height: 32px;
  display: flex;
  align-items: center;
  gap: 7px;
  text-shadow: 2px 2px 0 #000;
  background: linear-gradient(#3b3c36, #3b3c36) 0 27px / 100% 4px no-repeat;
}
.head.yellow { color: #dede3c; background: linear-gradient(#6b6a26, #6b6a26) 0 28px / 100% 3px no-repeat; }
.fold { width: 18px; height: 12px; fill: currentColor; margin-right: 5px; }
.range { margin-left: 9px; color: #6f6d21; text-shadow: none; }
.ticklabels + .track { margin-top: 5px; }

.lane { display: flex; height: 32px; }
.hole, .zone { flex: 1 1 0; min-width: 0; }
.zone {
  overflow: hidden;
  white-space: nowrap;
  text-shadow: 2px 2px 0 rgba(0, 0, 0, .7);
  box-shadow: inset 1px 2px 0 rgba(255, 255, 255, .15), inset -1px -2px 0 rgba(0, 0, 0, .35);
}
.tan .zone { background: #a99a60; }
.tan.deep .zone { background: #a29459; }
.zone.selected { line-height: 22px; border: solid #47dd42; border-width: 4px 0; box-shadow: inset 3px 0 0 #47dd42, inset -3px 0 0 #47dd42; }
.blue .zone { background: #646fad; }
.blue.deep .zone { background: #5e69a4; }
.blue.deeper .zone { background: #57629b; }
.blue .zone.thin { height: 30px; box-shadow: none; }
.brown .zone { background: #ab775e; height: 30px; text-indent: 18px; box-shadow: inset 0 0 0 2px #dacbc4; }
.brown .zone.cut { text-indent: 11px; }

.plot {
  height: 200px;
  position: relative;
  display: flex;
  flex-direction: column;
  justify-content: space-between;
  text-shadow: 2px 2px 0 #000, -2px -2px 0 #000, 2px -2px 0 #000, -2px 2px 0 #000;
  box-shadow: 0 2px 0 #57551f, inset 0 -1px 0 #57551f;
}
.plot span { position: relative; }
.memory { color: #d9661f; background: #23231b; }
.cpu { color: #21b5bd; background: #1e241f; }
.graph { position: absolute; inset: 0; width: 100%; height: 100%; overflow: visible; }
.cpu::after { content: ""; position: absolute; inset: auto 0 -2px; height: 3px; background: rgba(98, 94, 28, .8); }

.cursor { position: absolute; top: 2px; bottom: 0; left: 44%; width: 2px; background: rgba(255, 255, 255, .2); margin-left: 18px; }
.tooltip {
  position: absolute;
  top: 359px;
  left: 46%;
  display: flex;
  flex-direction: column;
  gap: 8px;
  padding: 15px 14px;
  background: #151513;
  border: 2px solid #35343a;
}
.tooltip hr { width: auto; margin: -1px -8px; }
```
